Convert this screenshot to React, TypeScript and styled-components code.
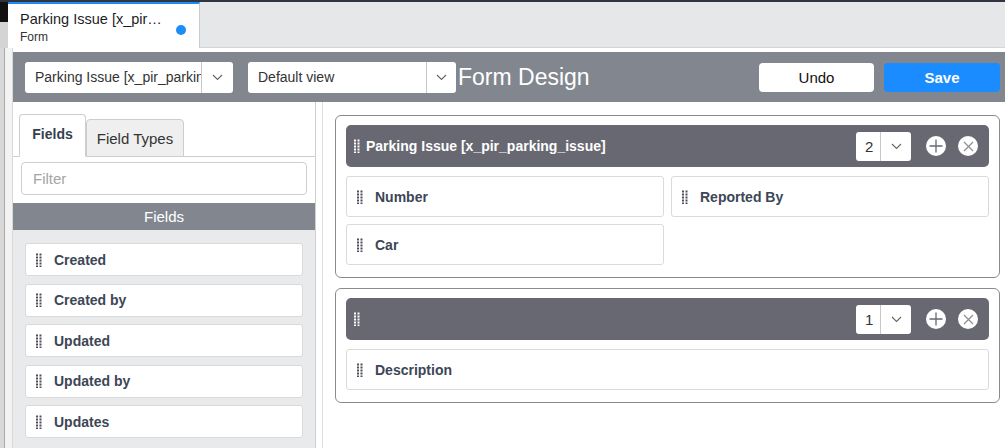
import styled, { createGlobalStyle } from 'styled-components';

const GlobalStyle = createGlobalStyle`
  html, body {
    margin: 0;
    padding: 0;
    background: #fff;
  }
  * {
    box-sizing: border-box;
  }
  body {
    font-family: 'Liberation Sans', Arial, sans-serif;
  }
`;

const Page = styled.div`
  width: 1005px;
  height: 448px;
  overflow: hidden;
  display: flex;
  flex-direction: column;
`;

const TabStrip = styled.div`
  display: flex;
  height: 48px;
  flex-shrink: 0;
  background: #e6e7e9;
  border-top: 2px solid #2f3541;
  border-bottom: 1px solid #d3d5d8;
`;

const Corner = styled.div`
  width: 8px;
  margin-bottom: -1px;
  background: linear-gradient(#111 0 20px, #d4d4d4 20px);
`;

const DocTab = styled.div`
  width: 192px;
  margin-bottom: -1px;
  background: #fff;
  border-top: 2px solid #1f8bf5;
  border-right: 1px solid #c9cbce;
  padding: 6px 12px 0 12px;
  display: flex;
  align-items: center;
  justify-content: space-between;
`;

const TabText = styled.div`
  display: flex;
  flex-direction: column;
  align-self: flex-start;
`;

const TabTitle = styled.span`
  font-size: 14.5px;
  color: #1d1d1f;
  line-height: 18px;
`;

const TabSub = styled.span`
  font-size: 12px;
  color: #333;
  line-height: 16px;
  margin-top: 1px;
`;

const Dot = styled.span`
  width: 10px;
  height: 10px;
  border-radius: 50%;
  background: #1e8ef7;
  margin-right: 1px;
  margin-top: 2px;
`;

const Body = styled.div`
  flex: 1;
  display: flex;
  min-height: 0;
`;

const Gutter = styled.div`
  width: 13px;
  flex-shrink: 0;
  background: linear-gradient(to right, #d8d8d8 0 4px, #a9a9a9 4px 5px, #f3f3f3 5px 12px, #d8d8d8 12px);
`;

const Workspace = styled.div`
  flex: 1;
  display: flex;
  flex-direction: column;
  padding-top: 4px;
  min-width: 0;
`;

const Toolbar = styled.div`
  height: 50px;
  flex-shrink: 0;
  background: #82878f;
  display: flex;
  align-items: center;
  padding: 0 5px 0 12px;
`;

const Select = styled.div<{ $w: number; $chev: number }>`
  width: ${(p) => p.$w}px;
  height: 31px;
  background: #fff;
  border-radius: 3px;
  display: flex;
  overflow: hidden;
  flex-shrink: 0;
  & > span:first-child {
    flex: 1;
    min-width: 0;
    white-space: nowrap;
    overflow: hidden;
    font-size: 14px;
    color: #333;
    line-height: 31px;
    padding-left: 10px;
  }
  & > span:last-child {
    width: ${(p) => p.$chev}px;
    flex-shrink: 0;
    border-left: 1px solid #c8c8c8;
    display: flex;
    align-items: center;
    justify-content: center;
  }
`;

const Spacer = styled.div<{ $w: number }>`
  width: ${(p) => p.$w}px;
  flex-shrink: 0;
`;

const PageTitle = styled.h1`
  margin: 0 0 0 2px;
  font-size: 23px;
  font-weight: normal;
  color: #fff;
  flex: 1;
  white-space: nowrap;
`;

const ToolButton = styled.button<{ $primary?: boolean }>`
  width: ${(p) => (p.$primary ? 116 : 115)}px;
  height: 29px;
  border: none;
  border-radius: 4px;
  font-family: inherit;
  font-size: 15px;
  margin-left: ${(p) => (p.$primary ? 10 : 0)}px;
  background: ${(p) => (p.$primary ? '#1a8cff' : '#fff')};
  color: ${(p) => (p.$primary ? '#fff' : '#111')};
  font-weight: ${(p) => (p.$primary ? 'bold' : 'normal')};
`;

const Content = styled.div`
  flex: 1;
  display: flex;
  min-height: 0;
`;

const Sidebar = styled.aside`
  width: 303px;
  flex-shrink: 0;
  border-right: 1px solid #cfcfcf;
  display: flex;
  flex-direction: column;
  overflow: hidden;
  & > * {
    flex-shrink: 0;
  }
`;

const SideTabs = styled.div`
  display: flex;
  align-items: flex-end;
  padding: 12px 0 0 6px;
  border-bottom: 1px solid #cdcdcd;
`;

const SideTab = styled.div<{ $active?: boolean }>`
  height: ${(p) => (p.$active ? 43 : 38)}px;
  width: ${(p) => (p.$active ? 67 : 98)}px;
  margin-bottom: -1px;
  border: 1px solid #cdcdcd;
  border-bottom: ${(p) => (p.$active ? '1px solid #fff' : '1px solid #cdcdcd')};
  border-radius: 4px 4px 0 0;
  background: ${(p) => (p.$active ? '#fff' : '#efefef')};
  display: flex;
  align-items: center;
  justify-content: center;
  font-size: ${(p) => (p.$active ? 14 : 15)}px;
  font-weight: ${(p) => (p.$active ? 'bold' : 'normal')};
  color: ${(p) => (p.$active ? '#353f4d' : '#333')};
  padding-bottom: ${(p) => (p.$active ? 4 : 0)}px;
`;

const FilterInput = styled.input`
  margin: 5px 8px 0 8px;
  height: 33px;
  border: 1px solid #cfcfcf;
  border-radius: 4px;
  padding: 0 11px;
  font-family: inherit;
  font-size: 15px;
  color: #333;
  outline: none;
  &::placeholder {
    color: #a5a5a5;
  }
`;

const ListHeader = styled.div`
  margin-top: 8px;
  height: 27px;
  background: #82878f;
  color: #fff;
  font-size: 15px;
  display: flex;
  align-items: center;
  justify-content: center;
`;

const FieldList = styled.div`
  flex: 1 0 auto;
  background: #e9eaeb;
  padding: 13px 12px;
  display: flex;
  flex-direction: column;
  gap: 7.5px;
`;

const FieldItem = styled.div<{ $h?: number }>`
  height: ${(p) => p.$h ?? 33}px;
  background: #fff;
  border: 1px solid #dadada;
  border-radius: 3px;
  display: flex;
  align-items: center;
  padding-left: 10px;
  gap: 12px;
  font-size: 14px;
  font-weight: bold;
  color: #3c4656;
  flex-shrink: 0;
`;

const Canvas = styled.main`
  flex: 1;
  margin-left: 6px;
  border-left: 1px solid #dedede;
  padding: 13px 5px 0 12px;
  display: flex;
  flex-direction: column;
  gap: 10px;
  min-width: 0;
`;

const Section = styled.section`
  border: 1px solid #8a8a90;
  border-radius: 6px;
  padding: 9px 10px 12px 10px;
  display: flex;
  flex-direction: column;
  gap: 9px;
`;

const SectionHeader = styled.div`
  height: 42px;
  background: #676872;
  border-radius: 5px;
  display: flex;
  align-items: center;
  padding: 0 11px 0 8px;
  gap: 6px;
`;

const SectionTitle = styled.span`
  flex: 1;
  font-size: 14px;
  font-weight: bold;
  color: #fff;
`;

const ColSelect = styled.div`
  width: 55px;
  height: 29px;
  background: #fff;
  border-radius: 3px;
  display: flex;
  margin-right: 9px;
  & > span:first-child {
    width: 25px;
    font-size: 15px;
    color: #333;
    line-height: 29px;
    padding-left: 9px;
    border-right: 1px solid #c8c8c8;
  }
  & > span:last-child {
    flex: 1;
    display: flex;
    align-items: center;
    justify-content: center;
  }
`;

const RoundButton = styled.span`
  width: 20px;
  height: 20px;
  border-radius: 50%;
  background: #fff;
  display: flex;
  align-items: center;
  justify-content: center;
  & + & {
    margin-left: 6px;
  }
`;

const FieldGrid = styled.div<{ $cols: number }>`
  display: grid;
  grid-template-columns: repeat(${(p) => p.$cols}, 1fr);
  gap: 7px;
`;

const Chevron = () => (
  <svg width="11" height="7" viewBox="0 0 11 7">
    <polyline points="1,1 5.5,5.5 10,1" fill="none" stroke="#666" strokeWidth="1.1" />
  </svg>
);

const Handle = ({ color = '#4a4f5a' }: { color?: string }) => (
  <svg width="6" height="14" viewBox="0 0 6 14">
    {[0, 1, 2, 3, 4].map((r) =>
      [0, 1].map((c) => (
        <rect key={`${r}-${c}`} x={c * 3.5} y={r * 3 + 0.5} width="2" height="2" fill={color} />
      ))
    )}
  </svg>
);

const PlusIcon = () => (
  <svg width="14" height="14" viewBox="0 0 14 14">
    <path d="M7 0.5v13M0.5 7h13" stroke="#676872" strokeWidth="1.3" />
  </svg>
);

const CloseIcon = () => (
  <svg width="11" height="11" viewBox="0 0 11 11">
    <path d="M1 1l9 9M10 1l-9 9" stroke="#8d8d93" strokeWidth="1.2" />
  </svg>
);

const sideFields = ['Created', 'Created by', 'Updated', 'Updated by', 'Updates'];

type SectionData = { title: string; cols: number; fields: string[] };

const sections: SectionData[] = [
  { title: 'Parking Issue [x_pir_parking_issue]', cols: 2, fields: ['Number', 'Reported By', 'Car'] },
  { title: '', cols: 1, fields: ['Description'] },
];

const FormSection = ({ data }: { data: SectionData }) => (
  <Section>
    <SectionHeader>
      <Handle color="#fff" />
      <SectionTitle>{data.title}</SectionTitle>
      <ColSelect>
        <span>{data.cols}</span>
        <span>
          <Chevron />
        </span>
      </ColSelect>
      <RoundButton>
        <PlusIcon />
      </RoundButton>
      <RoundButton>
        <CloseIcon />
      </RoundButton>
    </SectionHeader>
    <FieldGrid $cols={data.cols}>
      {data.fields.map((f) => (
        <FieldItem key={f} $h={41}>
          <Handle />
          {f}
        </FieldItem>
      ))}
    </FieldGrid>
  </Section>
);

export default function App() {
  return (
    <Page>
      <GlobalStyle />
      <TabStrip>
        <Corner />
        <DocTab>
          <TabText>
            <TabTitle>Parking Issue [x_pir…</TabTitle>
            <TabSub>Form</TabSub>
          </TabText>
          <Dot />
        </DocTab>
      </TabStrip>
      <Body>
        <Gutter />
        <Workspace>
          <Toolbar>
            <Select $w={208} $chev={32}>
              <span>Parking Issue [x_pir_parking_issue]</span>
              <span>
                <Chevron />
              </span>
            </Select>
            <Spacer $w={15} />
            <Select $w={208} $chev={30}>
              <span>Default view</span>
              <span>
                <Chevron />
              </span>
            </Select>
            <PageTitle>Form Design</PageTitle>
            <ToolButton>Undo</ToolButton>
            <ToolButton $primary>Save</ToolButton>
          </Toolbar>
          <Content>
            <Sidebar>
              <SideTabs>
                <SideTab $active>Fields</SideTab>
                <SideTab>Field Types</SideTab>
              </SideTabs>
              <FilterInput placeholder="Filter" />
              <ListHeader>Fields</ListHeader>
              <FieldList>
                {sideFields.map((f) => (
                  <FieldItem key={f}>
                    <Handle />
                    {f}
                  </FieldItem>
                ))}
              </FieldList>
            </Sidebar>
            <Canvas>
              {sections.map((s, i) => (
                <FormSection key={i} data={s} />
              ))}
            </Canvas>
          </Content>
        </Workspace>
      </Body>
    </Page>
  );
}
